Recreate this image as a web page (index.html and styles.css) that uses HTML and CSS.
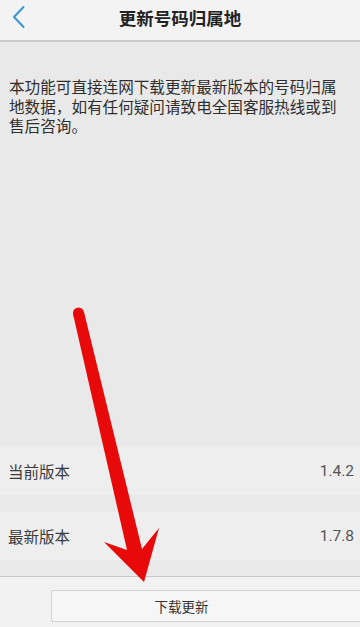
FILE: index.html
```html
<!DOCTYPE html>
<html lang="zh-CN">
<head>
<meta charset="utf-8">
<meta name="viewport" content="width=360">
<title>更新号码归属地</title>
<link rel="stylesheet" href="styles.css">
</head>
<body>
<div class="page">
  <header class="topbar">
    <span class="back">
      <svg width="16" height="24" viewBox="0 0 16 24"><path d="M11.5 2 L2 12 L11.5 22" fill="none" stroke="#3b98d3" stroke-width="2" stroke-linecap="round" stroke-linejoin="round"/></svg>
    </span>
    <h1 class="title">更新号码归属地</h1>
  </header>
  <main class="content">
    <p class="desc">本功能可直接连网下载更新最新版本的号码归属地数据，如有任何疑问请致电全国客服热线或到售后咨询。</p>
    <div class="rows">
      <div class="row"><span class="label">当前版本</span><span class="value">1.4.2</span></div>
      <div class="row"><span class="label">最新版本</span><span class="value">1.7.8</span></div>
    </div>
  </main>
  <footer class="footer">
    <button class="btn">下载更新</button>
  </footer>
  <svg class="arrow" width="360" height="627" viewBox="0 0 360 627">
    <circle cx="78.5" cy="313" r="5.5" fill="#e80a0a"/>
    <polygon points="73,314 127,550 104,542 144,582 159,528 142,549 84,312" fill="#e80a0a"/>
  </svg>
</div>
</body>
</html>
```
FILE: styles.css
```css
* { box-sizing: border-box; }
html, body { margin: 0; padding: 0; }
body {
  width: 360px;
  height: 627px;
  overflow: hidden;
  font-family: "Noto Sans CJK SC", "Noto Sans", sans-serif;
  background: #e9e9e9;
}
.page {
  position: relative;
  height: 627px;
  display: flex;
  flex-direction: column;
}
.topbar {
  height: 42px;
  flex: none;
  background: #f3f3f3;
  border-bottom: 2px solid #c9c9c9;
  display: flex;
  align-items: center;
  justify-content: center;
  padding-bottom: 4px;
  position: relative;
}
.back {
  position: absolute;
  left: 12px;
  top: 5px;
  display: flex;
}
.title {
  margin: 0;
  font-size: 17.5px;
  font-weight: 700;
  color: #222;
  letter-spacing: 0;
  line-height: 22px;
}
.content {
  flex: 1;
  display: flex;
  flex-direction: column;
  justify-content: space-between;
  background: #e9e9e9;
}
.desc {
  margin: 35px 0 0;
  padding: 0 12px 0 9px;
  font-size: 15.6px;
  line-height: 19.5px;
  color: #2e2e2e;
}
.rows {
  display: flex;
  flex-direction: column;
  gap: 17px;
  padding-bottom: 16px;
}
.row {
  height: 48px;
  background: #eeeeee;
  display: flex;
  align-items: center;
  justify-content: space-between;
  padding: 0 6px 0 8px;
}
.label {
  font-size: 15.5px;
  color: #3a3a3a;
}
.value {
  font-family: "Roboto", "Liberation Sans", sans-serif;
  font-size: 15.5px;
  color: #555;
}
.footer {
  flex: none;
  height: 51px;
  border-top: 1px solid #c8c8c8;
  background: #f1f1f1;
  padding: 13px 0 0 51px;
  display: flex;
  align-items: flex-start;
}
.btn {
  width: 309px;
  height: 32px;
  border: 1px solid #d3d3d3;
  border-right: none;
  border-radius: 3px 0 0 3px;
  background: #f6f6f6;
  padding: 0 49px 0 0;
  font-family: "Noto Sans CJK SC", sans-serif;
  font-size: 13.5px;
  color: #333;
}
.arrow {
  position: absolute;
  left: 0;
  top: 0;
  pointer-events: none;
}
```
